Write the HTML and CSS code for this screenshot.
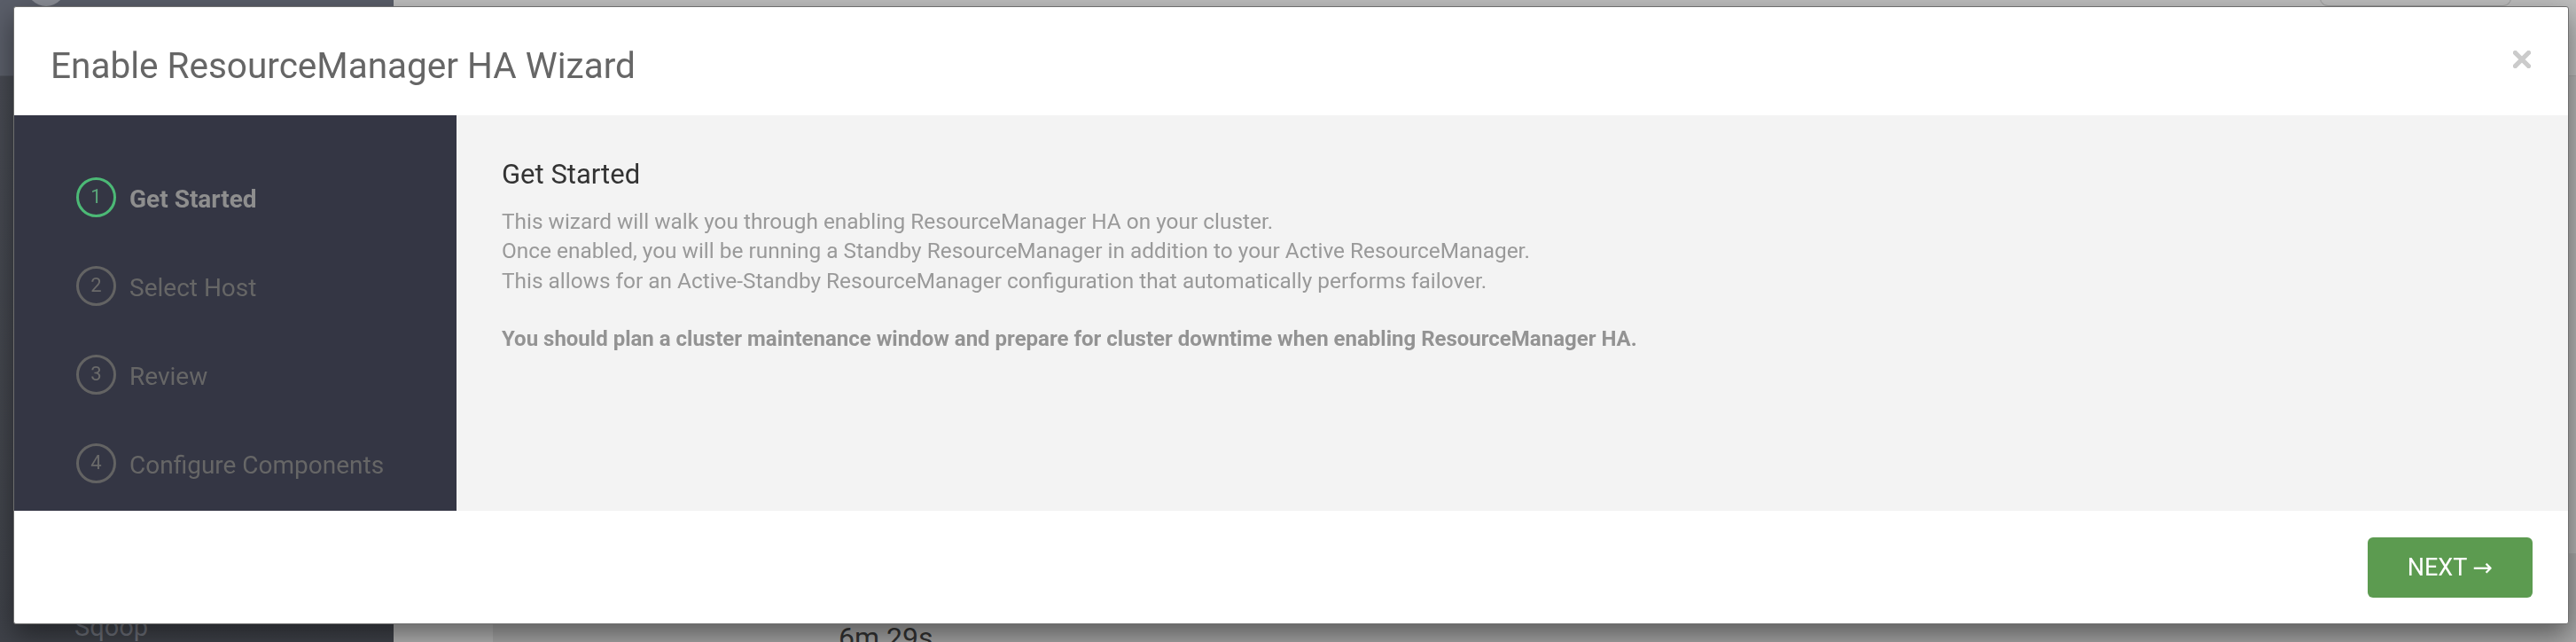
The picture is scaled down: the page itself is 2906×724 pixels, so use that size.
FILE: index.html
```html
<!DOCTYPE html>
<html lang="en">
<head>
<meta charset="utf-8">
<title>Enable ResourceManager HA Wizard</title>
<link rel="stylesheet" href="styles.css">
</head>
<body>
<div class="app">
  <aside class="app-side">
    <div class="app-logo"></div>
    <div class="app-side-item">Sqoop</div>
  </aside>
  <main class="app-main">
    <div class="app-topbar"><span class="app-topbtn"></span></div>
    <div class="app-content">
      <div class="app-panel"><span class="app-duration">6m 29s</span></div>
    </div>
  </main>
</div>

<div class="modal" role="dialog" aria-labelledby="wizard-title">
  <header class="modal-header">
    <h1 id="wizard-title" class="modal-title">Enable ResourceManager HA Wizard</h1>
    <button class="close" aria-label="Close">
      <svg width="20" height="20" viewBox="0 0 20 20"><path d="M2.5 2.5 L17.5 17.5 M17.5 2.5 L2.5 17.5" stroke="#cbcbcb" stroke-width="5.2" stroke-linecap="square"/></svg>
    </button>
  </header>
  <div class="modal-body">
    <nav class="steps">
      <div class="step active"><span class="step-num">1</span><span class="step-label">Get Started</span></div>
      <div class="step"><span class="step-num">2</span><span class="step-label">Select Host</span></div>
      <div class="step"><span class="step-num">3</span><span class="step-label">Review</span></div>
      <div class="step"><span class="step-num">4</span><span class="step-label">Configure Components</span></div>
    </nav>
    <section class="content">
      <h2 class="content-title">Get Started</h2>
      <p class="content-text">This wizard will walk you through enabling ResourceManager HA on your cluster.<br>Once enabled, you will be running a Standby ResourceManager in addition to your Active ResourceManager.<br>This allows for an Active-Standby ResourceManager configuration that automatically performs failover.</p>
      <p class="content-text strong">You should plan a cluster maintenance window and prepare for cluster downtime when enabling ResourceManager HA.</p>
    </section>
  </div>
  <footer class="modal-footer">
    <button class="btn-next">NEXT <span class="btn-arrow">→</span></button>
  </footer>
</div>
</body>
</html>
```

FILE: styles.css
```css
html, body {
  margin: 0;
  padding: 0;
}
body {
  width: 2906px;
  height: 724px;
  overflow: hidden;
  font-family: Roboto, "Liberation Sans", Arial, sans-serif;
  background: #b8b8b8;
}

/* dimmed background application */
.app {
  display: grid;
  grid-template-columns: 444px 1fr;
  height: 724px;
}
.app-side {
  background: linear-gradient(#5a5e69 0, #5a5e69 85px, #474a52 86px, #3f4249 100%);
  display: flex;
  flex-direction: column;
  justify-content: space-between;
  overflow: hidden;
}
.app-logo {
  width: 44px;
  height: 44px;
  margin: -37px 0 0 30px;
  border-radius: 50%;
  background: #8a8d95;
}
.app-side-item {
  font-size: 29px;
  color: #6e717a;
  padding-left: 84px;
  margin-bottom: 0;
}
.app-main {
  display: flex;
  flex-direction: column;
  background: #b3b3b3;
}
.app-topbar {
  height: 86px;
  background: #bdbdbd;
  border-bottom: 1px solid #a8a8a8;
  display: flex;
  justify-content: flex-end;
  box-sizing: border-box;
}
.app-topbtn {
  width: 216px;
  height: 47px;
  margin: -40px 73px 0 0;
  border: 1px solid #9c9c9c;
  border-radius: 9px;
  box-sizing: border-box;
}
.app-content {
  flex: 1;
  display: flex;
  align-items: flex-end;
  padding-left: 112px;
}
.app-panel {
  flex: 1;
  height: 100px;
  background: #a6a6a6;
  display: flex;
  align-items: flex-end;
}
.app-duration {
  margin: 0 0 -14px 390px;
  font-size: 32px;
  color: #333;
}

/* modal */
.modal {
  position: fixed;
  left: 15px;
  top: 7px;
  width: 2883px;
  height: 697px;
  box-sizing: border-box;
  border: 1px solid #6e6e6e;
  border-radius: 3px;
  background: #fff;
  display: flex;
  flex-direction: column;
  overflow: hidden;
  box-shadow: 0 12px 30px rgba(0, 0, 0, 0.45);
}
.modal-header {
  height: 122px;
  flex: none;
  box-sizing: border-box;
  display: flex;
  align-items: flex-start;
  padding: 42px 42px 0 41px;
}
.modal-title {
  margin: 0;
  font-size: 40.5px;
  font-weight: 400;
  color: #666;
  line-height: normal;
}
.close {
  margin: 7px 0 0 auto;
  padding: 0;
  border: 0;
  background: none;
  width: 20px;
  height: 20px;
  display: block;
}
.close svg {
  display: block;
}

.modal-body {
  height: 446px;
  flex: none;
  display: flex;
}
.steps {
  width: 499px;
  flex: none;
  background: #343644;
  padding: 70px 0 0 70px;
  box-sizing: border-box;
  display: flex;
  flex-direction: column;
  gap: 55px;
}
.step {
  display: flex;
  align-items: center;
  gap: 15px;
  height: 45px;
}
.step-num {
  width: 45px;
  height: 45px;
  box-sizing: border-box;
  border: 3px solid #636363;
  border-radius: 50%;
  display: flex;
  align-items: center;
  justify-content: center;
  font-size: 22px;
  color: #6a6a6a;
  padding-bottom: 2px;
}
.step-label {
  font-size: 28px;
  color: #666;
  padding-top: 3px;
}
.step.active .step-num {
  border-color: #4cb976;
  color: #5aa57a;
}
.step.active .step-label {
  font-weight: 700;
  color: #8e8e8e;
}

.content {
  flex: 1;
  background: #f3f3f3;
  padding: 48px 51px 0;
}
.content-title {
  margin: 0 0 18px;
  font-size: 31px;
  font-weight: 400;
  color: #333;
  line-height: normal;
}
.content-text {
  margin: 0;
  font-size: 24.4px;
  line-height: 33.33px;
  color: #999;
}
.content-text.strong {
  margin-top: 33.33px;
  font-size: 24px;
  font-weight: 700;
  color: #939393;
}

.modal-footer {
  flex: 1;
  display: flex;
  justify-content: flex-end;
  align-items: flex-start;
  padding: 30px 40px 0 0;
}
.btn-next {
  width: 186px;
  height: 68px;
  border: 0;
  border-radius: 6px;
  background: #5c9b50;
  color: #fff;
  font-family: Roboto, "Liberation Sans", Arial, sans-serif;
  font-size: 27px;
  padding: 0;
}
.btn-arrow {
  font-family: "DejaVu Sans", sans-serif;
  font-size: 27px;
}
```
